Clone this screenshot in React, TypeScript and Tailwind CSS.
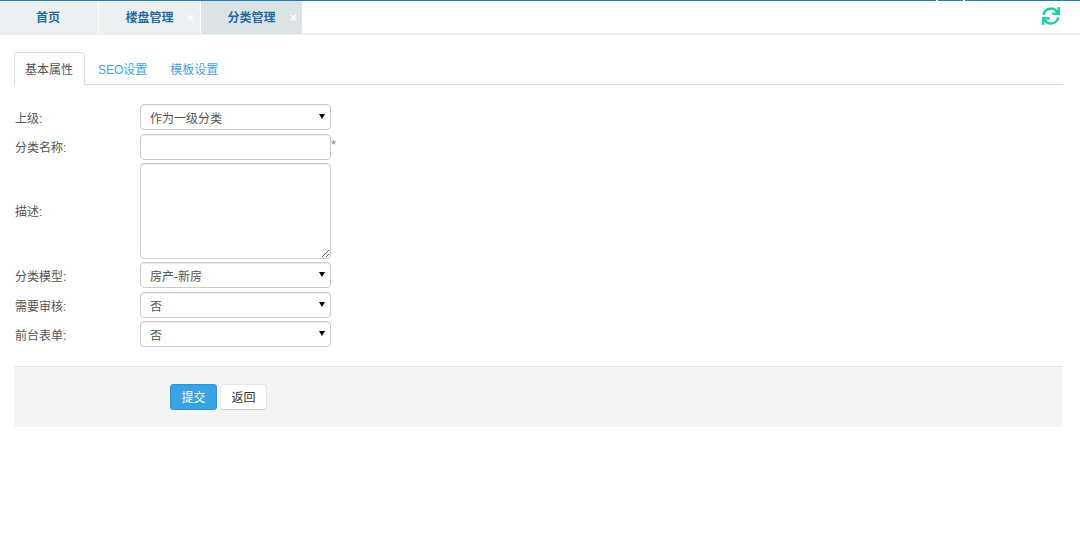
import { FaSync } from 'react-icons/fa'

const font = { fontFamily: '"Liberation Sans", "Noto Sans CJK SC", sans-serif' }

function Caret() {
  return (
    <span className="pointer-events-none absolute right-[6px] top-[10px] h-0 w-0 border-x-[3px] border-t-[5px] border-x-transparent border-t-black" />
  )
}

function SelectField({ label, value }: { label: string; value: string }) {
  return (
    <div className="flex h-[26px] items-center">
      <label className="w-[126px] pl-[1px] pt-[3px] text-[12px] text-[#555]">{label}</label>
      <div className="relative h-[26px] w-[191px]">
        <select className="h-full w-full appearance-none rounded-[4px] border border-[#ccc] bg-white pl-[9px] pt-[3px] text-[12px] text-[#555] shadow-[inset_0_1px_1px_rgba(0,0,0,0.075)] outline-none" defaultValue={value}>
          <option>{value}</option>
        </select>
        <Caret />
      </div>
    </div>
  )
}

export default function App() {
  return (
    <div className="h-[537px] w-[1080px] overflow-hidden bg-white" style={font}>
      {/* 顶部标签栏 */}
      <div className="flex h-[1px] gap-[2px]">
        <div className="w-[936px] bg-[#1f7fb8]" />
        <div className="w-[25px] bg-[#1f7fb8]" />
        <div className="flex-1 bg-[#1f7fb8]" />
      </div>
      <div className="flex h-[34px] items-start justify-between border-b-2 border-[#eeeeee]">
        <div className="flex h-[33px] gap-[1px]">
          <div className="flex w-[98px] items-center justify-center pr-[2px] pt-[1px] text-[12px] font-bold text-[#1f6ca3] bg-[#ecf0f1]">首页</div>
          <div className="relative flex w-[101px] items-center justify-center pt-[1px] text-[12px] font-bold text-[#1f6ca3] bg-[#ecf0f1]">
            楼盘管理
            <span className="absolute right-[6px] top-[8px] text-[12px] font-bold text-white">×</span>
          </div>
          <div className="relative flex w-[101px] items-center justify-center pt-[1px] text-[12px] font-bold text-[#1f6ca3] bg-[#dce3e5]">
            分类管理
            <span className="absolute right-[5px] top-[8px] text-[12px] font-bold text-white">×</span>
          </div>
        </div>
        <FaSync className="mr-[20px] mt-[6px] text-[18px] text-[#1ed0a6]" />
      </div>

      <div className="px-[14px] pr-[17px] pt-[17px]">
        <div className="flex h-[33px] border-b border-[#ddd] text-[12px]">
          <div className="flex h-[33px] w-[71px] items-center justify-center rounded-t-[4px] border border-b-0 border-[#ddd] bg-white pr-[1px] pt-[2px] text-[#555]">基本属性</div>
          <div className="ml-[13px] flex h-[32px] items-center pt-[3px] text-[#42a5e8]">SEO设置</div>
          <div className="ml-[23px] flex h-[32px] items-center pt-[3px] text-[#42a5e8]">模板设置</div>
        </div>

        <div className="mt-[19px] flex flex-col">
          <SelectField label="上级:" value="作为一级分类" />
          <div className="mt-[4px] flex h-[26px] items-center">
            <label className="w-[126px] pl-[1px] pt-[1px] text-[12px] text-[#555]">分类名称:</label>
            <input className="h-[26px] w-[191px] rounded-[4px] border border-[#ccc] bg-white shadow-[inset_0_1px_1px_rgba(0,0,0,0.075)] outline-none" />
            <span className="mb-[4px] text-[13px] text-[#888]">*</span>
          </div>
          <div className="mt-[3px] flex h-[96px] items-center">
            <label className="w-[126px] pl-[1px] pt-[1px] text-[12px] text-[#555]">描述:</label>
            <textarea className="h-[96px] w-[191px] rounded-[4px] border border-[#ccc] bg-white shadow-[inset_0_1px_1px_rgba(0,0,0,0.075)] outline-none" />
          </div>
          <div className="mt-[3px]">
            <SelectField label="分类模型:" value="房产-新房" />
          </div>
          <div className="mt-[4px]">
            <SelectField label="需要审核:" value="否" />
          </div>
          <div className="mt-[3px]">
            <SelectField label="前台表单:" value="否" />
          </div>
        </div>

        <div className="mt-[19px] flex h-[61px] border-t border-[#e5e5e5] bg-[#f4f4f4] pl-[156px] pt-[17px]">
          <button className="h-[26px] w-[47px] rounded-[3px] border border-[#2f94d0] bg-[#38a3e4] pt-[2px] text-[12px] text-white">提交</button>
          <button className="ml-[3px] h-[26px] w-[47px] rounded-[3px] border border-[#e6e6e6] border-b-[#ccc] bg-white pt-[2px] text-[12px] text-[#333]">返回</button>
        </div>
      </div>
    </div>
  )
}
